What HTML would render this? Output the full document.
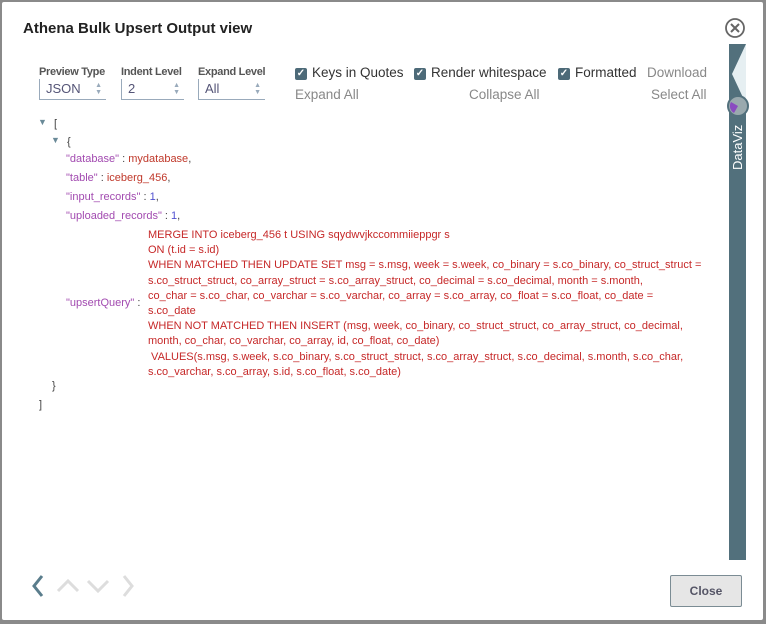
<!DOCTYPE html>
<html><head><style>
body{margin:0;width:766px;height:624px;background:#8a8a8a;font-family:"Liberation Sans",sans-serif;position:relative;overflow:hidden}
.dlg{position:absolute;left:2px;top:2px;width:761px;height:618px;background:#fff;border-radius:2px}
.abs{position:absolute;white-space:nowrap}
.title{left:21px;top:18px;font-size:15px;font-weight:bold;color:#222}
.lbl{font-size:11px;color:#555;font-weight:600;top:64px;letter-spacing:-.3px}
.sel{top:77px;height:20px;border-bottom:1px solid #9ab;border-left:1px solid #9ab;font-size:13px;color:#557;padding-left:6px;line-height:20px}
.sel i{position:absolute;right:4px;top:3px;font-style:normal;font-size:7px;line-height:7px;color:#9ab}
.cb{top:63px;font-size:13.5px;color:#333}
.cb b{display:inline-block;width:12px;height:12px;background:#4d6a78;border-radius:2px;color:#fff;font-size:10px;line-height:12px;text-align:center;vertical-align:1px;margin-right:5px}
.lnk{font-size:13.5px;color:#888}
.j{font-size:11px;letter-spacing:0}
.k{color:#a24ab0}.v{color:#c0392b}.n{color:#5050d0}.p{color:#444}
.tri{color:#6a8a98;font-size:9px}
.q{left:146px;top:226px;font-size:11px;color:#c62828;line-height:15.2px;letter-spacing:0;white-space:nowrap}
</style></head><body>
<div class="dlg">
<div class="abs title">Athena Bulk Upsert Output view</div>
<svg class="abs" style="left:722px;top:15px" width="22" height="22"><circle cx="11" cy="11" r="9" fill="none" stroke="#666" stroke-width="1.8"/><path d="M7 7L15 15M15 7L7 15" stroke="#666" stroke-width="2"/></svg>
<div class="abs lbl" style="left:37px">Preview Type</div>
<div class="abs lbl" style="left:119px">Indent Level</div>
<div class="abs lbl" style="left:196px">Expand Level</div>
<div class="abs sel" style="left:37px;width:60px">JSON<i>▲<br>▼</i></div>
<div class="abs sel" style="left:119px;width:56px">2<i>▲<br>▼</i></div>
<div class="abs sel" style="left:196px;width:60px">All<i>▲<br>▼</i></div>
<div class="abs cb" style="left:293px"><b>✓</b>Keys in Quotes</div>
<div class="abs cb" style="left:412px"><b>✓</b>Render whitespace</div>
<div class="abs cb" style="left:556px"><b>✓</b>Formatted</div>
<div class="abs lnk" style="left:645px;top:63px">Download</div>
<div class="abs lnk" style="left:293px;top:85px">Expand All</div>
<div class="abs lnk" style="left:467px;top:85px">Collapse All</div>
<div class="abs lnk" style="left:649px;top:85px">Select All</div>
<div class="abs" style="left:727px;top:42px;width:17px;height:516px;background:#52707c"></div>
<svg class="abs" style="left:727px;top:42px" width="17" height="60"><path d="M17 0V60L3 30Z" fill="#e6eff2"/></svg>
<svg class="abs" style="left:725px;top:93px" width="22" height="22"><circle cx="11" cy="11" r="10" fill="#9aa9ae" stroke="#52707c" stroke-width="2"/><path d="M11 11L4 7A8 8 0 0 0 7 18Z" fill="#8a4bc0"/></svg>
<div class="abs" style="left:728px;top:168px;transform:rotate(-90deg);transform-origin:0 0;color:#fff;font-size:13px">DataViz</div>
<div class="abs j tri" style="left:36px;top:115px">▼</div><div class="abs j p" style="left:52px;top:116px">[</div>
<div class="abs j tri" style="left:49px;top:133px">▼</div><div class="abs j p" style="left:65px;top:134px">{</div>
<div class="abs j" style="left:64px;top:151px"><span class="k">"database"</span><span class="p"> : </span><span class="v">mydatabase</span><span class="p">,</span></div>
<div class="abs j" style="left:64px;top:170px"><span class="k">"table"</span><span class="p"> : </span><span class="v">iceberg_456</span><span class="p">,</span></div>
<div class="abs j" style="left:64px;top:189px"><span class="k">"input_records"</span><span class="p"> : </span><span class="n">1</span><span class="p">,</span></div>
<div class="abs j" style="left:64px;top:208px"><span class="k">"uploaded_records"</span><span class="p"> : </span><span class="n">1</span><span class="p">,</span></div>
<div class="abs j" style="left:64px;top:295px"><span class="k">"upsertQuery"</span><span class="p"> :</span></div>
<div class="abs q">MERGE INTO iceberg_456 t USING sqydwvjkccommiieppgr s<br>ON (t.id = s.id)<br>WHEN MATCHED THEN UPDATE SET msg = s.msg, week = s.week, co_binary = s.co_binary, co_struct_struct =<br>s.co_struct_struct, co_array_struct = s.co_array_struct, co_decimal = s.co_decimal, month = s.month,<br>co_char = s.co_char, co_varchar = s.co_varchar, co_array = s.co_array, co_float = s.co_float, co_date =<br>s.co_date<br>WHEN NOT MATCHED THEN INSERT (msg, week, co_binary, co_struct_struct, co_array_struct, co_decimal,<br>month, co_char, co_varchar, co_array, id, co_float, co_date)<br>&nbsp;VALUES(s.msg, s.week, s.co_binary, s.co_struct_struct, s.co_array_struct, s.co_decimal, s.month, s.co_char,<br>s.co_varchar, s.co_array, s.id, s.co_float, s.co_date)</div>
<div class="abs j p" style="left:50px;top:378px">}</div>
<div class="abs j p" style="left:37px;top:397px">]</div>
<svg class="abs" style="left:26px;top:571px" width="115" height="26"><path d="M14 3L6 13L14 23" fill="none" stroke="#5a7d8c" stroke-width="3"/><path d="M30 18L40 8L50 18" fill="none" stroke="#ddd" stroke-width="3"/><path d="M60 8L70 18L80 8" fill="none" stroke="#ddd" stroke-width="3"/><path d="M96 3L104 13L96 23" fill="none" stroke="#ddd" stroke-width="3"/></svg>
<div class="abs" style="left:668px;top:573px;width:70px;height:30px;background:#e6e6e6;border:1px solid #7b8c94;border-radius:2px;font-size:12px;font-weight:bold;color:#556;text-align:center;line-height:30px">Close</div>
</div>
</body></html>
